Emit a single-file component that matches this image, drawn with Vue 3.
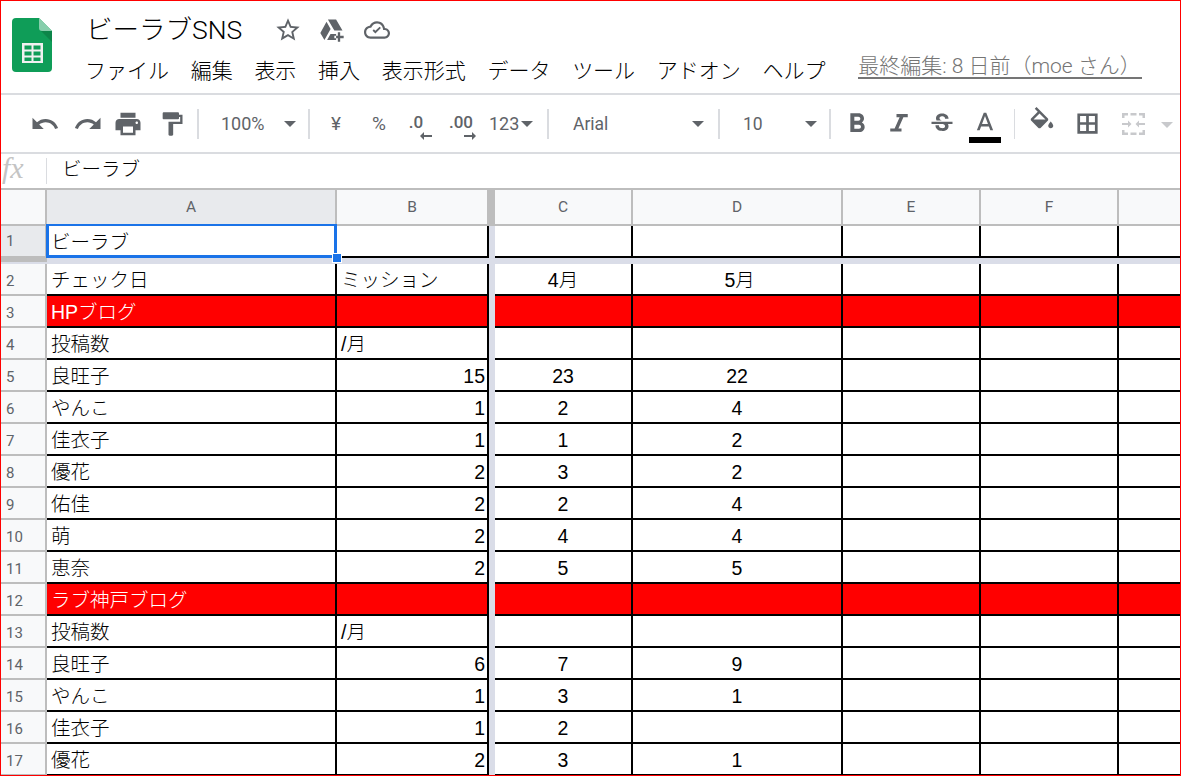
<script setup>
const P = {
  undo: 'M12.5 8c-2.65 0-5.05.99-6.9 2.6L2 7v9h9l-3.62-3.62c1.39-1.16 3.16-1.88 5.12-1.88 3.54 0 6.55 2.31 7.6 5.5l2.37-.78C21.08 11.03 17.15 8 12.5 8z',
  redo: 'M18.4 10.6C16.55 8.99 14.15 8 11.5 8c-4.65 0-8.58 3.03-9.96 7.22L3.9 16c1.05-3.19 4.05-5.5 7.6-5.5 1.95 0 3.73.72 5.12 1.88L13 16h9V7l-3.6 3.6z',
  print: 'M19 8H5c-1.66 0-3 1.34-3 3v6h4v4h12v-4h4v-6c0-1.66-1.34-3-3-3zm-3 11H8v-5h8v5zm3-7c-.55 0-1-.45-1-1s.45-1 1-1 1 .45 1 1-.45 1-1 1zm-1-9H6v4h12V3z',
  paint: 'M18 4V3c0-.55-.45-1-1-1H5c-.55 0-1 .45-1 1v4c0 .55.45 1 1 1h12c.55 0 1-.45 1-1V6h1v4H9v11c0 .55.45 1 1 1h2c.55 0 1-.45 1-1v-9h8V4h-3z',
  bold: 'M15.6 10.79c.97-.67 1.65-1.77 1.65-2.79 0-2.26-1.75-4-4-4H7v14h7.04c2.09 0 3.71-1.7 3.71-3.79 0-1.52-.86-2.82-2.15-3.42zM10 6.5h3c.83 0 1.5.67 1.5 1.5s-.67 1.5-1.5 1.5h-3v-3zm3.5 9H10v-3h3.5c.83 0 1.5.67 1.5 1.5s-.67 1.5-1.5 1.5z',
  italic: 'M10 4v2.500h2.500l-4 9H5V18h9v-2.500h-2.500l4-9H19V4z',
  strike: 'M7.24 8.75c-.26-.48-.39-1.03-.39-1.67 0-.61.13-1.16.4-1.67.26-.5.63-.93 1.11-1.29.48-.35 1.05-.63 1.7-.83.66-.19 1.39-.29 2.18-.29.81 0 1.54.11 2.21.34.66.22 1.23.54 1.69.94.47.4.83.88 1.08 1.43.25.55.38 1.15.38 1.81h-3.01c0-.31-.05-.59-.15-.85-.09-.27-.24-.49-.44-.68-.2-.19-.45-.33-.75-.44-.3-.1-.66-.16-1.06-.16-.39 0-.74.04-1.03.13-.29.09-.53.21-.72.36-.19.16-.34.34-.44.55-.1.21-.15.43-.15.66 0 .48.25.88.74 1.21.38.25.77.48 1.41.7H7.39c-.05-.08-.11-.17-.15-.25zM21 12v-2H3v2h9.62c.18.07.4.14.55.2.37.17.66.34.87.51.21.17.35.36.43.57.07.2.11.43.11.69 0 .23-.05.45-.14.66-.09.2-.23.38-.42.53-.19.15-.42.26-.71.35-.29.08-.63.13-1.01.13-.43 0-.83-.04-1.18-.13s-.66-.23-.91-.42c-.25-.19-.45-.44-.59-.75-.14-.31-.25-.76-.25-1.21H6.4c0 .55.08 1.13.24 1.58.16.45.37.85.65 1.21.28.35.6.66.98.92.37.26.78.48 1.22.65.44.17.9.3 1.38.39.48.08.96.13 1.44.13.8 0 1.53-.09 2.18-.28s1.21-.45 1.67-.79c.46-.34.82-.77 1.07-1.27s.38-1.07.38-1.71c0-.6-.1-1.14-.31-1.61-.05-.11-.11-.23-.17-.33H21z',
  textA: 'M11 3 5.5 17h2.25l1.12-3h6.25l1.12 3h2.25L13 3h-2zm-1.38 9L12 5.67 14.38 12H9.62z',
  fill: 'M16.56 8.94L7.62 0 6.21 1.41l2.38 2.38-5.15 5.15c-.59.59-.59 1.54 0 2.12l5.5 5.5c.29.29.68.44 1.06.44s.77-.15 1.06-.44l5.5-5.5c.59-.58.59-1.53 0-2.12zM5.21 10L10 5.21 14.79 10H5.21zM19 11.5s-2 2.17-2 3.5c0 1.1.9 2 2 2s2-.9 2-2c0-1.33-2-3.5-2-3.5z',
  borders: 'M3 3v18h18V3zM5.400 5.400h5.400v5.400H5.400zM13.200 5.400h5.400v5.400h-5.400zM5.400 13.200h5.400v5.400H5.400zM13.200 13.200h5.400v5.400h-5.400z',
  merge: 'M1 0h6v2.500H3.500V5H1zM9.500 0h6v2.500h-6zM18 0h6v5h-2.500V2.500H18zM1 17h2.500v2.500H7V22H1zM9.500 19.500h6V22h-6zM21.500 17H24v5h-6v-2.500h3.500zM1 10h6V7.500l3.500 3.500L7 14.500V12H1zM24 10h-6V7.500L14.500 11l3.500 3.500V12h6z'
}

const tools = [
  { k: 'gap', w: 23 },
  { k: 'icon', w: 42, d: P.undo, s: 30 },
  { k: 'icon', w: 43, d: P.redo, s: 30 },
  { k: 'icon', w: 38, d: P.print, s: 30 },
  { k: 'icon', w: 50, d: P.paint, s: 28 },
  { k: 'sep', w: 2 },
  { k: 'text', w: 85, t: '100%', big: true, pad: 22 },
  { k: 'arrow', w: 12 },
  { k: 'gap', w: 12 },
  { k: 'sep', w: 2 },
  { k: 'sym', w: 52, t: '¥' },
  { k: 'sym', w: 34, t: '%' },
  { k: 'dec', w: 44, t: '.0', left: true },
  { k: 'dec', w: 42, t: '.00' },
  { k: 'text', w: 37, t: '123', big: true, pad: 7 },
  { k: 'gap', w: 2 },
  { k: 'arrow', w: 12 },
  { k: 'gap', w: 14 },
  { k: 'sep', w: 2 },
  { k: 'text', w: 143, t: 'Arial', pad: 24 },
  { k: 'arrow', w: 12 },
  { k: 'gap', w: 14 },
  { k: 'sep', w: 2 },
  { k: 'text', w: 85, t: '10', pad: 23 },
  { k: 'arrow', w: 12 },
  { k: 'gap', w: 12 },
  { k: 'sep', w: 2 },
  { k: 'icon', w: 52, d: P.bold, s: 32 },
  { k: 'icon', w: 32, d: P.italic, s: 30 },
  { k: 'icon', w: 54, d: P.strike, s: 28 },
  { k: 'color', w: 32, d: P.textA },
  { k: 'gap', w: 12 },
  { k: 'sep', w: 2, thin: true },
  { k: 'icon', w: 54, d: P.fill, s: 30, up: true },
  { k: 'icon', w: 36, d: P.borders, s: 27 },
  { k: 'merge', w: 56, d: P.merge },
  { k: 'arrow', w: 12, off: true }
]

const menus = ['ファイル', '編集', '表示', '挿入', '表示形式', 'データ', 'ツール', 'アドオン', 'ヘルプ']
const columns = [
  { t: 'A', c: 'col-a on' },
  { t: 'B', c: 'col-b-head' },
  { t: 'C', c: 'col-c' },
  { t: 'D', c: 'col-d' },
  { t: 'E', c: 'col-e' },
  { t: 'F', c: 'col-f' },
  { t: '', c: 'col-g' }
]
const rows = [
  { n: 2, v: ['チェック日', 'ミッション', '4月', '\u00a05月'] },
  { n: 3, v: ['HPブログ', '', '', ''], red: true },
  { n: 4, v: ['投稿数', '/月', '', ''] },
  { n: 5, v: ['良旺子', '15', '23', '22'], num: true },
  { n: 6, v: ['やんこ', '1', '2', '4'], num: true },
  { n: 7, v: ['佳衣子', '1', '1', '2'], num: true },
  { n: 8, v: ['優花', '2', '3', '2'], num: true },
  { n: 9, v: ['佑佳', '2', '2', '4'], num: true },
  { n: 10, v: ['萌', '2', '4', '4'], num: true },
  { n: 11, v: ['恵奈', '2', '5', '5'], num: true },
  { n: 12, v: ['ラブ神戸ブログ', '', '', ''], red: true },
  { n: 13, v: ['投稿数', '/月', '', ''] },
  { n: 14, v: ['良旺子', '6', '7', '9'], num: true },
  { n: 15, v: ['やんこ', '1', '3', '1'], num: true },
  { n: 16, v: ['佳衣子', '1', '2', ''], num: true },
  { n: 17, v: ['優花', '2', '3', '1'], num: true }
]
</script>

<template>
  <div class="page">
    <header class="head">
      <svg class="logo" width="40" height="54" viewBox="0 0 40 54">
        <path d="M4 0H27L40 13V50a4 4 0 0 1-4 4H4a4 4 0 0 1-4-4V4a4 4 0 0 1 4-4z" fill="#0f9d58" />
        <path d="M29 13H40V24z" fill="#0c8549" />
        <path d="M27 0L40 13H30a3 3 0 0 1-3-3z" fill="#87ceac" />
        <path d="M10 25H31V45H10zM12.500 27.500V31.500H19.500V27.500zM21.500 27.500V31.500H28.500V27.500zM12.500 33.500V37.500H19.500V33.500zM21.500 33.500V37.500H28.500V33.500zM12.500 39.500V43H19.500V39.500zM21.500 39.500V43H28.500V39.500z" fill="#f1f1f1" fill-rule="evenodd" />
      </svg>
      <div class="head-main">
        <div class="title-row">
          <span class="title">ビーラブSNS</span>
          <svg class="t-star" width="28" height="28" viewBox="0 0 24 24"><path fill="#5f6368" d="M22 9.240l-7.190-.62L12 2 9.190 8.630 2 9.240l5.460 4.730L5.820 21 12 17.270 18.180 21l-1.630-7.030L22 9.240zM12 15.400l-3.760 2.270 1-4.280-3.320-2.880 4.380-.38L12 6.100l1.710 4.040 4.380.38-3.320 2.880 1 4.280L12 15.400z" /></svg>
          <svg class="t-drive" width="28" height="28" viewBox="0 0 24 24"><path fill="#5f6368" d="M8.500 3h7l5.500 9.500h-7zM2 14.500 7.300 5l3.500 6.100L5.500 20.500zM7.800 20.500l2.900-5h4.800v5zM17 14v3h-3v2h3v3h2v-3h3v-2h-3v-3z" /></svg>
          <svg class="t-cloud" width="26" height="26" viewBox="0 0 24 24"><path fill="#5f6368" d="M19.350 10.040C18.670 6.590 15.640 4 12 4 9.110 4 6.600 5.640 5.350 8.040 2.340 8.360 0 10.910 0 14c0 3.310 2.690 6 6 6h13c2.760 0 5-2.240 5-5 0-2.640-2.050-4.780-4.650-4.960zM19 18H6c-2.210 0-4-1.790-4-4 0-2.050 1.530-3.760 3.560-3.970l1.070-.11.500-.95C8.080 7.140 9.940 6 12 6c2.620 0 4.880 1.860 5.390 4.430l.3 1.500 1.530.11c1.560.1 2.780 1.410 2.780 2.960 0 1.650-1.350 3-3 3zm-8.500-2.800-2.600-2.600 1.200-1.200 1.400 1.400 3.900-3.900 1.200 1.200z" /></svg>
        </div>
        <nav class="menu">
          <span v-for="m in menus" :key="m">{{ m }}</span>
          <span class="last-edit">最終編集: 8 日前（moe さん）</span>
        </nav>
      </div>
    </header>

    <div class="toolbar">
      <template v-for="(t, i) in tools" :key="i">
        <div class="slot" :style="{ width: t.w + 'px' }">
          <svg v-if="t.k === 'icon'" :class="{ up: t.up }" :width="t.s" :height="t.s" viewBox="0 0 24 24"><path fill="#5f6368" fill-rule="evenodd" :d="t.d" /></svg>
          <span v-else-if="t.k === 'sep'" class="sep" :class="{ thin: t.thin }"></span>
          <span v-else-if="t.k === 'text'" class="tool-text" :class="{ big: t.big }" :style="{ paddingLeft: t.pad + 'px' }">{{ t.t }}</span>
          <span v-else-if="t.k === 'arrow'" class="arrow" :class="{ off: t.off }"></span>
          <span v-else-if="t.k === 'sym'" class="sym">{{ t.t }}</span>
          <span v-else-if="t.k === 'dec'" class="dec" :class="{ 'dec-left': t.left }">
            <span class="dec-text">{{ t.t }}</span>
            <svg class="dec-arrow" :class="{ toleft: t.left }" width="12" height="8" viewBox="0 0 12 8">
              <path v-if="t.left" fill="#5f6368" d="M4 0v3h8v2H4v3L0 4z" />
              <path v-else fill="#5f6368" d="M8 0v3H0v2h8v3l4-4z" />
            </svg>
          </span>
          <span v-else-if="t.k === 'color'" class="color">
            <svg width="30" height="30" viewBox="0 0 24 24"><path fill="#5f6368" fill-rule="evenodd" :d="t.d" /></svg>
            <span class="color-bar"></span>
          </span>
          <svg v-else-if="t.k === 'merge'" width="25" height="22" viewBox="0 0 25 22"><path fill="#c8c9cc" :d="t.d" /></svg>
        </div>
      </template>
    </div>

    <div class="formula">
      <span class="fx">fx</span>
      <span class="fx-sep"></span>
      <span class="fx-value">ビーラブ</span>
    </div>

    <section class="sheet">
      <div class="col-heads">
        <div class="corner"></div>
        <div v-for="c in columns" :key="c.t" class="col-head" :class="c.c">{{ c.t }}</div>
      </div>

      <div class="row">
        <div class="num on first">1</div>
        <div class="cell col-a">ビーラブ</div>
        <div class="cell col-b"></div>
        <div class="freeze"></div>
        <div class="cell col-c"></div>
        <div class="cell col-d"></div>
        <div class="cell col-e"></div>
        <div class="cell col-f"></div>
        <div class="cell col-g"></div>
      </div>

      <div class="freeze-row">
        <div class="freeze-left"></div>
        <div class="freeze-rest"></div>
      </div>

      <div v-for="r in rows" :key="r.n" class="row" :class="{ red: r.red }">
        <div class="num">{{ r.n }}</div>
        <div class="cell col-a">{{ r.v[0] }}</div>
        <div class="cell col-b" :class="{ right: r.num }">{{ r.v[1] }}</div>
        <div class="freeze"></div>
        <div class="cell col-c mid">{{ r.v[2] }}</div>
        <div class="cell col-d mid">{{ r.v[3] }}</div>
        <div class="cell col-e"></div>
        <div class="cell col-f"></div>
        <div class="cell col-g"></div>
      </div>

      <div class="selection"><span class="handle"></span></div>
    </section>
  </div>
</template>

<style>
html, body { margin: 0; background: #fff; }
</style>

<style scoped>
.page {
  width: 1181px;
  height: 776px;
  box-sizing: border-box;
  border: 1px solid #ff0000;
  overflow: hidden;
  background: #fff;
  font-family: "Noto Sans CJK JP", sans-serif;
  color: #000;
}
.head {
  height: 92px;
  border-bottom: 2px solid #dadce0;
  display: flex;
  box-sizing: content-box;
}
.logo { margin: 17px 0 0 11px; flex: none; }
.head-main { margin-left: 33px; display: flex; flex-direction: column; }
.title-row { display: flex; align-items: center; height: 30px; margin-top: 14px; margin-left: 1px; }
.title { font-size: 26.5px; font-weight: 300; line-height: 30px; width: 156px; white-space: nowrap; font-family: "Roboto", "Noto Sans CJK JP", sans-serif; }
.t-star { margin-left: 32px; margin-top: -1px; }
.t-drive { margin-left: 16px; margin-top: -1px; }
.t-cloud { margin-left: 18px; margin-top: -1px; }
.menu { display: flex; gap: 21.7px; font-size: 21px; line-height: 30px; margin-top: 9px; font-weight: 300; white-space: nowrap; }
.last-edit {
  margin-left: 11px;
  color: #757575;
  font-family: "Roboto", "Noto Sans CJK JP", sans-serif;
  border-bottom: 2px solid #757575;
  height: 23px;
  line-height: 25px;
  padding-right: 1px;
}

.toolbar { height: 57px; border-bottom: 2px solid #dadce0; display: flex; align-items: center; overflow: hidden; }
.slot { flex: none; display: flex; align-items: center; justify-content: center; height: 57px; }
.up { transform: translateY(-2px); }
.sep { width: 2px; height: 30px; background: #dadce0; }
.sep.thin { width: 1px; }
.tool-text { width: 100%; box-sizing: border-box; color: #5f6368; font: 17.5px "Roboto", sans-serif; }
.tool-text.big { font-size: 18px; }
.arrow { width: 0; height: 0; border-left: 6px solid transparent; border-right: 6px solid transparent; border-top: 6px solid #5f6368; }
.arrow.off { border-top-color: #c8c9cc; transform: translateY(1px); }
.sym { color: #5f6368; font: 19px "Roboto", sans-serif; }
.dec { display: flex; flex-direction: column; color: #5f6368; font: 500 17px/17px "Roboto", sans-serif; transform: translateY(3px); }
.dec-left { transform: translate(-2px, 3px); }
.dec-text { display: block; }
.dec-arrow { align-self: flex-end; margin-top: 1px; margin-right: -3px; }
.dec-arrow.toleft { margin-right: -9px; }
.color { display: flex; flex-direction: column; align-items: center; transform: translateY(2px); width: 32px; }
.color-bar { width: 32px; height: 6px; background: #000; margin-top: -2px; }

.formula { height: 34px; display: flex; align-items: center; }
.fx { width: 45px; padding-left: 1px; box-sizing: border-box; font: italic 30px/30px "Liberation Serif", serif; color: #c4c4c4; transform: translateY(-3px); }
.fx-sep { width: 1px; height: 26px; background: #dadce0; }
.fx-value { margin-left: 15px; font-size: 19.5px; font-weight: 300; line-height: 28px; transform: translateY(-3px); }

.sheet { position: relative; border-top: 2px solid #bdbdbd; }
.col-heads { display: flex; height: 36px; box-sizing: border-box; border-bottom: 2px solid #bdbdbd; background: #f8f9fa; }
.corner { width: 46px; flex: none; box-sizing: border-box; border-right: 2px solid #bdbdbd; }
.col-head {
  flex: none;
  box-sizing: border-box;
  border-right: 2px solid #bdbdbd;
  color: #5f6368;
  font: 15.5px/35px "Roboto", "Liberation Sans", sans-serif;
  text-align: center;
}
.col-head.on { background: #e8eaed; }
.col-b-head { width: 158px; border-right-width: 8px; }
.col-a { width: 290px; }
.col-b { width: 152px; }
.col-c { width: 138px; }
.col-d { width: 210px; }
.col-e { width: 138px; }
.col-f { width: 138px; }
.col-g { width: 80px; border-right: 0 !important; }

.row { display: flex; height: 32px; }
.num {
  width: 46px;
  flex: none;
  box-sizing: border-box;
  background: #f8f9fa;
  border-right: 2px solid #bdbdbd;
  border-bottom: 2px solid #bdbdbd;
  color: #5f6368;
  font: 15px/30px "Roboto", "Liberation Sans", sans-serif;
  padding-left: 5px;
  padding-top: 2px;
}
.num.on { background: #e8eaed; }
.num.first { padding-top: 0; }
.cell {
  flex: none;
  box-sizing: border-box;
  border-right: 2px solid #000;
  border-bottom: 2px solid #000;
  padding: 1px 2px 0 4px;
  font: 300 19.5px/30px "Liberation Sans", "Noto Sans CJK JP", sans-serif;
  color: #000;
  white-space: nowrap;
  overflow: hidden;
}
.cell.right { text-align: right; }
.cell.mid { text-align: center; padding: 1px 0 0; }
.red .cell { background: #ff0000; color: #fff; }
.freeze { width: 6px; flex: none; background: #dadde8; }
.freeze-row { display: flex; height: 6px; }
.freeze-left { width: 46px; box-sizing: border-box; background: #bdbdbd; border-bottom: 2px solid #dadde8; }
.freeze-rest { flex: 1; background: #dadde8; }

.selection {
  position: absolute;
  left: 45px;
  top: 34px;
  width: 291px;
  height: 34px;
  box-sizing: border-box;
  border: solid #1a73e8;
  border-width: 2px 3px 3px;
  pointer-events: none;
}
.handle {
  position: absolute;
  right: -8px;
  bottom: -8px;
  width: 8px;
  height: 8px;
  background: #1a73e8;
  border: 1px solid #fff;
}
</style>
